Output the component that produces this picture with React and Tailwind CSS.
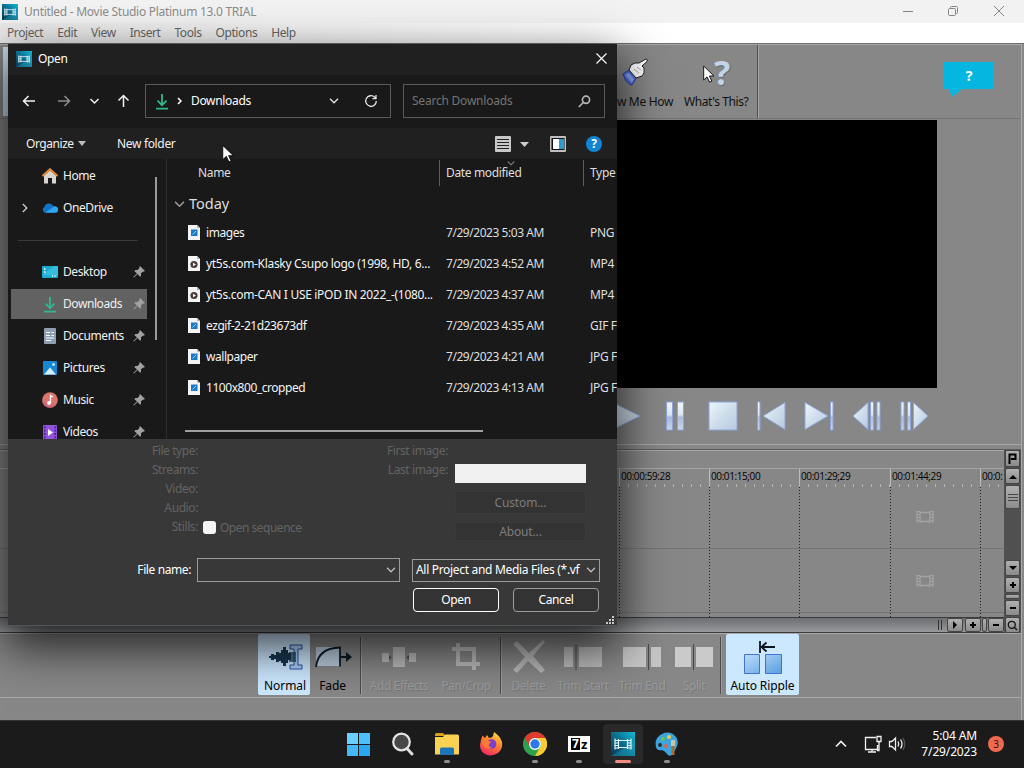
import clsx from "clsx";

const files = [
  { name: "images", date: "7/29/2023 5:03 AM", type: "PNG" },
  { name: "yt5s.com-Klasky Csupo logo (1998, HD, 6...", date: "7/29/2023 4:52 AM", type: "MP4", video: true },
  { name: "yt5s.com-CAN I USE iPOD IN 2022_-(1080...", date: "7/29/2023 4:37 AM", type: "MP4", video: true },
  { name: "ezgif-2-21d23673df", date: "7/29/2023 4:35 AM", type: "GIF F" },
  { name: "wallpaper", date: "7/29/2023 4:21 AM", type: "JPG F" },
  { name: "1100x800_cropped", date: "7/29/2023 4:13 AM", type: "JPG F" },
];

function StudioIcon({ size = 16 }) {
  return (
    <svg width={size} height={size} viewBox="0 0 24 24" className="shrink-0">
      <defs>
        <linearGradient id="studio" x1="0" y1="1" x2="1" y2="0">
          <stop offset="0" stopColor="#0a3550" />
          <stop offset="0.5" stopColor="#0b6d8d" />
          <stop offset="1" stopColor="#12b9d6" />
        </linearGradient>
      </defs>
      <rect width="24" height="24" fill="url(#studio)" />
      <path d="M0 24 24 10V24z" fill="#27b9d8" opacity=".35" />
      <path d="M4 6.500v11M7.500 7v10M16.500 7v10M20 6.500v11M4 8.500h3.500M4 11h3.500M4 13.500h3.500M4 16h3.500M16.500 8.500H20M16.500 11H20M16.500 13.500H20M16.500 16H20M7.500 8.500h9M7.500 15.500h9" stroke="#e4f6fa" strokeWidth="1.200" fill="none" />
    </svg>
  );
}

function Cursor({ className, size = 18 }) {
  return (
    <svg width={size * 0.65} height={size} viewBox="0 0 12 18" className={className}>
      <path d="M.7.8v14.400l3.500-3.200 2.500 5.300 2.300-1-2.400-5.200h4.600z" fill="#fff" stroke="#111" strokeWidth="1" />
    </svg>
  );
}

function DownloadIcon() {
  return (
    <svg width="14" height="17" viewBox="0 0 14 17" fill="none" stroke="#2fb890" strokeWidth="1.800">
      <path d="M7 1v11M2.500 7.700 7 12.200l4.500-4.500M1 15.700h12" />
    </svg>
  );
}

function Chevron({ className, color = "#e6e6e6", w = 10 }) {
  return (
    <svg width={w} height={w * 0.6} viewBox="0 0 10 6" fill="none" className={clsx("shrink-0", className)}>
      <path d="m1 .8 4 4 4-4" stroke={color} strokeWidth="1.300" />
    </svg>
  );
}

function TitleBar() {
  return (
    <header className="h-[44px] shrink-0 border-b border-[#6b6e70]">
      <div className="flex h-[23px] items-center bg-[#f2f2f2] pl-[2px] text-[12px] text-[#8c8c8c]">
        <StudioIcon size={16} />
        <span className="ml-[6px] w-[240px] tracking-[-0.28px] whitespace-nowrap">Untitled - Movie Studio Platinum 13.0 TRIAL</span>
        <svg width="112" height="14" viewBox="0 0 112 14" fill="none" stroke="#858585" className="-mt-[2px] mr-[16px] ml-auto">
          <path d="M7 7.500h10" />
          <rect x="52.500" y="4.500" width="7" height="7" rx="1" />
          <path d="M54.500 4.500v-1q0-1 1-1h5q1 0 1 1v5q0 1-1 1h-1" />
          <path d="m98 2 10 10M108 2 98 12" />
        </svg>
      </div>
      <nav className="flex h-[20px] items-center gap-[14px] bg-linear-to-r from-[#e9e9e9] to-white to-60% pl-[7px] text-[12px] tracking-[-0.42px] text-[#666]">
        {["Project", "Edit", "View", "Insert", "Tools", "Options", "Help"].map((m) => (
          <span key={m}>{m}</span>
        ))}
      </nav>
    </header>
  );
}

function TopToolbar() {
  return (
    <div className="flex h-[75px] items-stretch border-t border-b border-t-[#a8a8a8] border-b-[#747474]">
      <div className="my-[2px] ml-[3px] w-[40px] bg-[#c9def0]" />
      <div className="ml-[560px] w-[80px] pt-[13px] text-center">
        <svg width="26" height="28" viewBox="0 0 26 28" className="ml-[19px]">
          <path d="m1 16 6-4 7 8-4 7q-6-1-9-11z" fill="#4f70dc" stroke="#26409a" />
          <path d="m3 17 4-2 5 6-2 4z" fill="#8aa5f2" />
          <path d="m7 12 2-5 4-2 4 0 7-4q2 0 1 2.500l-5 4.500 2 2q1 6-2 8l-6 2z" fill="#fff" stroke="#222" />
          <path d="m15 9 4 3M12 11l5 4" stroke="#999" strokeWidth=".8" />
        </svg>
      </div>
      <div className="w-[75px] border-r border-[#505050] shadow-[1px_0_0_#a6a6a6]">
        <div className="relative mt-[12px] ml-[20px] h-[30px] w-[30px] font-['Open_Sans'] text-[34px] leading-[30px] font-bold text-[#c3d4e6] [text-shadow:1px_1px_1px_#5b6d80]">
          <span className="ml-[11px]">?</span>
          <Cursor className="absolute top-[8px] left-0" size={18} />
        </div>
      </div>
      <div className="mt-[17px] mr-[27px] ml-auto h-[36px] w-[50px]">
        <div className="flex h-[27px] items-center justify-center bg-[#05b7e0] text-[14px] font-bold text-white">?</div>
        <svg width="20" height="9" className="ml-[5px]"><path d="M0 0h13L3 8z" fill="#05b7e0" /></svg>
      </div>
    </div>
  );
}

function ToolbarLabels() {
  return (
    <div className="absolute top-[94px] left-[592px] flex gap-[11px] text-[12px] leading-[16px] whitespace-nowrap text-[#111]">
      <span className="w-[81px] text-right">Show Me How</span>
      <span className="tracking-[-0.4px]">What's This?</span>
    </div>
  );
}

function Transport() {
  return (
    <div className="flex h-[56px] items-center pl-[603px]">
      <svg width="336" height="36" viewBox="0 0 336 36" fill="url(#glass)" stroke="#8ea4da" strokeWidth="1">
        <defs>
          <linearGradient id="glass" x1="0" y1="0" x2="1" y2="1">
            <stop offset="0" stopColor="#eaf6fc" />
            <stop offset="0.500" stopColor="#cfdeeb" />
            <stop offset="1" stopColor="#b5c9e2" />
          </linearGradient>
          <linearGradient id="bar" x1="0" y1="0" x2="0" y2="1">
            <stop offset="0" stopColor="#f0f8fd" />
            <stop offset="0.450" stopColor="#dbe7f2" />
            <stop offset="0.550" stopColor="#a9bbd9" />
            <stop offset="1" stopColor="#c9daee" />
          </linearGradient>
        </defs>
        <path d="m9 4 28 14L9 32z" />
        <g fill="url(#bar)">
          <rect x="63.500" y="4" width="6" height="28" />
          <rect x="74.500" y="4" width="6" height="28" />
          <rect x="154.500" y="4" width="2.500" height="28" />
          <rect x="227.500" y="4" width="2.500" height="28" />
          <rect x="267.500" y="4" width="3" height="28" />
          <rect x="274" y="4" width="3" height="28" />
          <rect x="298" y="4" width="3" height="28" />
          <rect x="304.500" y="4" width="3" height="28" />
        </g>
        <rect x="106" y="4" width="28" height="28" />
        <path d="M182 4.500v27L160 18z" />
        <path d="M202 4.500v27L225 18z" />
        <path d="M265 4.500v27L250 18z" />
        <path d="M310.500 4.500v27L325 18z" />
      </svg>
    </div>
  );
}

const cell = "flex shrink-0 items-center justify-center rounded-[2px] border border-[#454545] bg-linear-to-b from-[#b0b0b0] to-[#8b8b8b] text-black";

function PlusMinus({ plus }) {
  return (
    <svg width="8" height="8" stroke="#000" strokeWidth="2">
      <path d={plus ? "M1 4h6M4 1v6" : "M1 4h6"} />
    </svg>
  );
}

function Film() {
  return (
    <svg width="20" height="14" viewBox="0 0 20 14" fill="none" stroke="#a3a3a3" strokeWidth="1.300">
      <path d="M2 1v12M5 1v12M15 1v12M18 1v12M5 2.500h10M5 11.500h10" />
      <path d="M3.500 1v12M16.500 1v12" strokeDasharray="1 2" strokeWidth="3" />
    </svg>
  );
}

function Timeline() {
  const marks = [
    ["00:00:59:28", "w-[90px]"],
    ["00:01:15;00", "w-[90px]"],
    ["00:01:29;29", "w-[91px]"],
    ["00:01:44;29", "w-[90px]"],
    ["00:0:", "w-[24px]"],
  ];
  return (
    <div className="flex h-[184px] border-t border-[#5e5e5e]">
      <div className="flex w-[1004px] flex-col border-t border-[#a8a8a8]">
        <div className="h-[18px] border-b border-[#a6a6a6]" />
        <div className="relative flex h-[148px] pl-[619px]">
          <div className="absolute inset-x-0 top-[79px] h-px bg-[#757575]" />
          <div className="absolute inset-x-0 top-[143px] h-px bg-[#757575]" />
          {marks.map(([t, w]) => (
            <div key={t} className={clsx(w, "flex shrink-0 flex-col overflow-hidden")}>
              <div className="h-[15px] border-l border-[#bbb] pl-px font-['Open_Sans'] text-[10px] leading-[15px] tracking-[-0.4px] whitespace-nowrap text-black">{t}</div>
              <div className="h-[3px] bg-[repeating-linear-gradient(90deg,#b5b5b5_0_1px,transparent_1px_9px)]" />
              <div className="w-px flex-1 bg-[repeating-linear-gradient(#222_0_1px,transparent_1px_3px)]" />
            </div>
          ))}
          <div className="absolute top-[41px] left-[915px]"><Film /></div>
          <div className="absolute top-[105px] left-[915px]"><Film /></div>
        </div>
        <div className="flex h-[16px] border-y border-[#3a3a3a] bg-linear-to-b from-[#6c6f73] to-[#97999b]">
          <div className="mr-[3px] ml-auto flex items-center gap-[2px]">
            <i className="h-[10px] w-px bg-[#333]" />
            <i className="h-[10px] w-px bg-[#333]" />
          </div>
          <div className={clsx(cell, "mx-[2px] w-[16px]")}><svg width="6" height="8"><path d="M1 0v8l4-4z" /></svg></div>
          <div className={clsx(cell, "w-[16px]")}><PlusMinus plus /></div>
          <div className={clsx(cell, "mx-[1px] w-[5px]")} />
          <div className={clsx(cell, "w-[16px]")}><PlusMinus /></div>
        </div>
      </div>
      <div className="flex w-[17px] flex-col gap-[1px] bg-[#505050] px-px">
        <div className={clsx(cell, "h-[17px]")}>
          <svg width="9" height="11" fill="none" stroke="#000" strokeWidth="2"><path d="M1.500 11V1.500h6V6H3" /></svg>
        </div>
        <div className={clsx(cell, "h-[16px]")}><svg width="8" height="5"><path d="m0 5 4-4 4 4z" /></svg></div>
        <div className={clsx(cell, "h-[24px] flex-col gap-[2px]")}>
          <i className="h-px w-[10px] bg-[#444]" />
          <i className="h-px w-[10px] bg-[#444]" />
          <i className="h-px w-[10px] bg-[#444]" />
        </div>
        <div className="flex-1" />
        <div className={clsx(cell, "h-[16px]")}><svg width="8" height="5"><path d="m0 0 4 4 4-4z" /></svg></div>
        <div className={clsx(cell, "h-[16px]")}><PlusMinus plus /></div>
        <div className={clsx(cell, "h-[5px]")} />
        <div className={clsx(cell, "h-[16px]")}><PlusMinus /></div>
        <div className={clsx(cell, "h-[16px]")}>
          <svg width="11" height="11" fill="none" stroke="#111" strokeWidth="1.300"><circle cx="4.800" cy="4.800" r="3.500" /><path d="m7 7 3 3" /></svg>
        </div>
      </div>
    </div>
  );
}

function Tool({ label, className, off, children }) {
  return (
    <div className={clsx("flex shrink-0 flex-col items-center", className)}>
      <div className="flex h-[44px] items-center pt-[1px]">{children}</div>
      <span className={clsx("text-[12px] leading-[16px] whitespace-nowrap", off ? "tracking-[-0.4px] text-[#9a9a9a] [text-shadow:1px_1px_0_#777]" : "tracking-[-0.1px] text-black")}>{label}</span>
    </div>
  );
}

function Divider({ className }) {
  return <div className={clsx("my-[3px] w-px shrink-0 bg-[#4c4c4c] shadow-[1px_0_0_#9c9c9c]", className)} />;
}

function EditToolbar() {
  return (
    <div className="flex h-[65px] border-y border-[#aaa] pl-[258px]">
      <Tool label="Normal" className="h-[61px] w-[52px] rounded-[2px] bg-[#cce8ff] pl-[2px]">
        <svg width="36" height="28" viewBox="0 0 36 28">
          <path d="M2 13h2v-2h3v1h2V9h3v1h2V7h2V4h3v3h2v3h3v7h-3v3h-2v3h-3v-3h-2v-2h-2v1H9v-3H7v1H4v-2H2z" fill="#17384f" />
          <path d="M23 2h12v4h-4v16h4v4H23v-4h4V6h-4z" fill="#9dbff0" fillOpacity=".7" stroke="#2654a5" />
          <path d="M22 9h7v10h-7z" fill="#17384f" opacity=".7" />
        </svg>
      </Tool>
      <Tool label="Fade" className="w-[45px]">
        <svg width="38" height="28" viewBox="0 0 38 28" className="ml-[2px]">
          <rect x="1" y="4" width="24" height="19" fill="#b9cbdd" />
          <path d="M1 24Q3 5 25 4.500v19M25 14h10" fill="none" stroke="#0b1c29" strokeWidth="1.800" />
          <path d="m31 9 6 5-6 5z" fill="#0b1c29" />
        </svg>
      </Tool>
      <Divider className="ml-[5px]" />
      <Tool label="Add Effects" off className="w-[76px]">
        <svg width="34" height="24" fill="#b9b9b9"><path d="M11 2h12v20H11zM0 8h7v9H0zM27 8h7v9h-7z" /><path d="M7 10l3 2.500L7 15zM27 10l-3 2.500 3 2.500z" fill="#555" /></svg>
      </Tool>
      <Tool label="Pan/Crop" off className="w-[58px]">
        <svg width="28" height="28" fill="none" stroke="#b9b9b9" strokeWidth="4"><path d="M0 6h22v21M6 0v21h22" /></svg>
      </Tool>
      <Divider className="ml-[5px]" />
      <Tool label="Delete" off className="w-[55px]">
        <svg width="34" height="34" fill="#b6b6b6"><path d="m1 4 4-3 12 12L31 0l2 2-12 14 12 14-4 3-13-12L5 33l-4-3 12-13z" /></svg>
      </Tool>
      <Tool label="Trim Start" off className="w-[54px]">
        <svg width="38" height="26" fill="#bbb"><path d="M0 3h9v20H0zM15 3h23v20H15z" /><path d="M12 0v26" stroke="#484848" /></svg>
      </Tool>
      <Tool label="Trim End" off className="w-[64px]">
        <svg width="38" height="26" fill="#c6c6c6"><path d="M0 3h23v20H0zM28 3h10v20H28z" /><path d="M25.500 0v26" stroke="#484848" /></svg>
      </Tool>
      <Tool label="Split" off className="w-[40px]">
        <svg width="38" height="26" fill="#cacaca"><path d="M0 3h16v20H0zM21 3h17v20H21z" /><path d="M18.500 0v26" stroke="#484848" /></svg>
      </Tool>
      <Divider className="ml-[6px]" />
      <Tool label="Auto Ripple" className="ml-[5px] h-[61px] w-[73px] rounded-[2px] bg-[#cce8ff] tracking-[-0.2px]">
        <svg width="40" height="36" viewBox="0 0 40 36">
          <defs>
            <linearGradient id="ripple" x1="0" y1="0" x2="1" y2="1">
              <stop offset="0" stopColor="#b9dcfb" />
              <stop offset="1" stopColor="#5b9ee0" />
            </linearGradient>
          </defs>
          <path d="M1.500 15.500h15v19h-15zM22.500 15.500h16v19h-16z" fill="url(#ripple)" stroke="#4272cc" />
          <path d="M17 2v12M20 8h12M23.500 3.500 18.500 8l5 4.500" fill="none" stroke="#0a1420" strokeWidth="1.800" />
        </svg>
      </Tool>
    </div>
  );
}

function Pin() {
  return (
    <svg width="12" height="12" viewBox="0 0 12 12" fill="#a2a2a2">
      <path d="M7 0 12 5l-1.500.8-.6-.3-2 2 .2 2.200-1 1L4.500 8 1 11.500.3 11 4 7.400 1.300 4.900l1-1 2.200.2 2-2L6.200 1.500z" />
    </svg>
  );
}

function PlaceIcon({ name }) {
  if (name === "Downloads") return <DownloadIcon />;
  return (
    <svg width="16" height="16" viewBox="0 0 16 16">
      {name === "Home" && (
        <>
          <path d="M2 7.500 8 2.500l6 5V15.500h-4V10H6v5.500H2z" fill="#d9d5d1" />
          <path d="M.5 8 8 1.200 15.500 8" fill="none" stroke="#e08a3c" strokeWidth="2" />
        </>
      )}
      {name === "OneDrive" && (
        <>
          <path d="M3 12.500A3 3 0 0 1 2.300 7a5 5 0 0 1 9.200-.8A3.300 3.300 0 0 1 13 12.500z" fill="#1272c4" />
          <path d="M3 12.800 11 7.200a3 3 0 0 1 5 3 2.600 2.600 0 0 1-2.500 2.600z" fill="#2fa7ee" />
        </>
      )}
      {name === "Desktop" && (
        <>
          <rect y="2" width="16" height="12" rx="1" fill="#1ea8cf" />
          <path d="M0 11 12 2h3q1 0 1 1v9z" fill="#3cc6e0" opacity=".7" />
          <path d="M2 5h1.500M2 8h1.500M10 12h1M12.500 12h1" stroke="#fff" strokeWidth="1.300" />
        </>
      )}
      {name === "Documents" && (
        <>
          <rect x="2" width="12" height="16" rx="1" fill="#8f9fb3" />
          <path d="M4 4.500h4M4 7.500h4M9.500 4.500H12M9.500 7.500H12M4 10h8M4 12.500h5" stroke="#fff" strokeWidth="1.200" />
        </>
      )}
      {name === "Pictures" && (
        <>
          <rect x="1" y="1" width="14" height="14" rx="1" fill="#1687d3" />
          <path d="m2 14.500 6-7 6 7z" fill="#d7eefb" />
          <circle cx="11.500" cy="4.500" r="1.300" fill="#fff" />
        </>
      )}
      {name === "Music" && (
        <>
          <circle cx="8" cy="8" r="7.800" fill="#dc7569" />
          <path d="M0 9a8 8 0 0 0 14 4z" fill="#c55f80" opacity=".6" />
          <path d="M8.500 11V3.500l2.500 1.500" fill="none" stroke="#fff" strokeWidth="1.300" />
          <circle cx="7" cy="11" r="1.900" fill="#fff" />
        </>
      )}
      {name === "Videos" && (
        <>
          <rect x="1" y="1" width="14" height="15" rx="1" fill="#9254dc" />
          <path d="M2.800 2.500v13M13.200 2.500v13" stroke="#4b2192" strokeWidth="1.800" strokeDasharray="1.800 1.500" />
          <path d="m6 5 5 3.500L6 12z" fill="#fff" />
        </>
      )}
    </svg>
  );
}

function Place({ name, pinned, expandable, selected }) {
  return (
    <div className={clsx("ml-[3px] flex h-[32px] w-[136px] shrink-0 items-center bg-clip-content py-[1px] text-[12px] tracking-[-0.42px] text-[#f0f0f0]", selected && "bg-[#626262]")}>
      <span className="w-[31px] pl-[9px]">
        {expandable && <Chevron className="-rotate-90" color="#d0d0d0" />}
      </span>
      <span className="flex w-[16px] justify-center"><PlaceIcon name={name} /></span>
      <span className="ml-[5px]">{name}</span>
      {pinned && <span className="mr-[2px] ml-auto"><Pin /></span>}
    </div>
  );
}

function FileIcon({ video }) {
  return (
    <svg width="12" height="15" viewBox="0 0 12 15">
      <path d="M0 0h9l3 3v12H0z" fill="#f4f4f4" />
      <path d="M9 0v3h3z" fill="#b5b5b5" />
      {video ? (
        <>
          <circle cx="6" cy="8.500" r="3.600" fill="#4b3b3b" />
          <path d="m5 6.700 3 1.800-3 1.800z" fill="#fff" />
        </>
      ) : (
        <>
          <rect x="3" y="4.500" width="6.500" height="6.500" fill="#1b7ac8" />
          <path d="m4.500 9.500 3.500-3.500" stroke="#8fd0f7" />
        </>
      )}
    </svg>
  );
}

function DialogTop() {
  return (
    <>
      <div className="flex h-[31px] shrink-0 items-center bg-[#202020] pr-[10px] pb-[2px] pl-[8px] text-[12px] text-white">
        <StudioIcon size={16} />
        <span className="ml-[6px]">Open</span>
        <svg width="11" height="11" className="ml-auto" stroke="#fff" strokeWidth="1.100"><path d="m.5.5 10 10M10.500.5l-10 10" /></svg>
      </div>
      <div className="flex h-[53px] shrink-0 items-center bg-[#191919] pb-px text-[12px]">
        <svg width="110" height="14" viewBox="0 0 110 14" fill="none" stroke="#f2f2f2" strokeWidth="1.500" className="ml-[14px]">
          <path d="M13 7H1.500M6.500 2l-5 5 5 5" />
          <path d="M36 7h11.500M42.500 2l5 5-5 5" stroke="#8f8f8f" />
          <path d="m68.500 5 4 4 4-4" />
          <path d="M101.500 13V1.500M96.500 6.500l5-5 5 5" />
        </svg>
        <div className="ml-[13px] flex h-[34px] w-[246px] items-center border border-[#5a5a5a] text-white">
          <span className="ml-[9px]"><DownloadIcon /></span>
          <svg width="5" height="8" className="ml-[8px]" fill="none" stroke="#fff" strokeWidth="1.500"><path d="m1 1 3 3-3 3" /></svg>
          <span className="ml-[9px]">Downloads</span>
          <Chevron className="ml-auto" />
          <svg width="14" height="14" viewBox="0 0 14 14" fill="none" stroke="#e8e8e8" strokeWidth="1.300" className="mr-[12px] ml-[25px]">
            <path d="M12.300 7a5.300 5.300 0 1 1-1.700-3.900L12 4.500M12 1v3.700H8.500" />
          </svg>
        </div>
        <div className="ml-[12px] flex h-[34px] w-[202px] items-center border border-[#5a5a5a] text-[#747474]">
          <span className="ml-[8px] tracking-[-0.22px]">Search Downloads</span>
          <svg width="13" height="13" fill="none" stroke="#b5b5b5" strokeWidth="1.700" className="mr-[13px] ml-auto">
            <circle cx="8" cy="4.800" r="3.600" /><path d="M5.300 7.500.8 12" />
          </svg>
        </div>
      </div>
      <div className="flex h-[31px] shrink-0 items-center bg-[#202020] text-[12px] text-[#f0f0f0]">
        <span className="ml-[18px] w-[47px] tracking-[-0.45px]">Organize</span>
        <svg width="8" height="5" className="ml-[5px]"><path d="M0 0h8L4 5z" fill="#bdbdbd" /></svg>
        <span className="ml-[31px]">New folder</span>
        <svg width="110" height="18" viewBox="0 0 110 18" className="mr-[14px] ml-auto">
          <rect x="2" y="1" width="16" height="16" rx="1" fill="#c8c8c8" />
          <path d="M4 4.500h12M4 7.500h12M4 10.500h12M4 13.500h12" stroke="#222" />
          <path d="M27 7h9l-4.500 5z" fill="#ccc" />
          <rect x="57" y="1" width="16" height="16" rx="1" fill="#c0c0c0" />
          <rect x="58.500" y="3" width="13" height="12" fill="#111" />
          <path d="M60 4h6.500v10H60z" fill="#fff" />
          <path d="M66.500 4H71v10h-4.500z" fill="#2b9bc9" />
          <circle cx="101" cy="9" r="8" fill="#1184d3" />
          <text x="101" y="13" textAnchor="middle" fill="#fff" fontSize="12" fontWeight="bold">?</text>
        </svg>
      </div>
    </>
  );
}

function Explorer() {
  return (
    <div className="flex h-[280px] shrink-0 overflow-hidden bg-[#191919] text-[12px]">
      <div className="flex w-[159px] shrink-0 border-r border-[#2e2e2e]">
        <div className="flex w-[147px] flex-col pt-[1px]">
          <Place name="Home" />
          <Place name="OneDrive" expandable />
          <div className="flex h-[32px] shrink-0 items-center"><div className="ml-[10px] h-px w-[120px] bg-[#3a3a3a]" /></div>
          <Place name="Desktop" pinned />
          <Place name="Downloads" pinned selected />
          <Place name="Documents" pinned />
          <Place name="Pictures" pinned />
          <Place name="Music" pinned />
          <Place name="Videos" pinned />
        </div>
        <div className="mt-[18px] h-[163px] w-[2px] bg-[#9b9b9b]" />
      </div>
      <div className="flex w-[450px] flex-col overflow-hidden pl-[18px]">
        <div className="flex h-[28px] shrink-0 items-center text-[#dedede]">
          <span className="w-[254px] shrink-0 pl-[13px]">Name</span>
          <div className="relative h-[26px] w-[144px] shrink-0 border-l border-[#5d5d5d] pl-[6px] leading-[26px] tracking-[-0.35px]">
            Date modified
            <Chevron className="absolute top-[1px] left-[67px]" color="#888" w={8} />
          </div>
          <div className="h-[26px] border-l border-[#5d5d5d] pl-[6px] leading-[26px]">Type</div>
        </div>
        <div className="flex h-[30px] shrink-0 items-center pt-[4px] text-[14.500px] tracking-normal text-[#dedede]">
          <Chevron className="mr-[4px] -ml-[11px]" color="#9a9a9a" w={11} />
          Today
        </div>
        {files.map((f) => (
          <div key={f.name} className="flex h-[31px] shrink-0 items-center whitespace-nowrap text-[#f4f4f4]">
            <span className="ml-[3px] w-[18px] shrink-0"><FileIcon video={f.video} /></span>
            <span className={clsx("w-[240px] shrink-0", f.video ? "tracking-[-0.31px]" : "tracking-[-0.45px]")}>{f.name}</span>
            <span className="w-[144px] shrink-0 tracking-[-0.450px] text-[#dedede]">{f.date}</span>
            <span className="text-[#dedede]">{f.type}</span>
          </div>
        ))}
        <div className="mt-[27px] h-[2px] w-[298px] shrink-0 bg-[#a0a0a0]" />
      </div>
    </div>
  );
}

function DialogBottom() {
  const disabled = "flex items-center justify-center border border-[#3a3a3a] bg-[#333] text-[#7c7c7c] tracking-[-0.15px]";
  return (
    <div className="relative flex flex-1 flex-col bg-[#383838] text-[12px] tracking-[-0.4px] text-[#636363]">
      <div className="flex h-[119px] pt-[2px]">
        <div className="w-[190px] text-right leading-[19px]">
          {["File type:", "Streams:", "Video:", "Audio:", "Stills:"].map((l) => (
            <div key={l}>{l}</div>
          ))}
        </div>
        <div className="mt-[79px] ml-[5px] flex h-[15px] w-[130px] items-center gap-[4px]">
          <span className="h-[13px] w-[13px] rounded-[3px] bg-[#f5f5f5]" />
          <span className="tracking-[-0.5px]">Open sequence</span>
        </div>
        <div className="w-[115px] text-right leading-[19px]">
          <div>First image:</div>
          <div>Last image:</div>
        </div>
        <div className="ml-[7px] flex w-[131px] flex-col pt-[23px]">
          <div className="h-[19px] bg-[#f0f0f0]" />
          <div className={clsx(disabled, "mt-[8px] h-[23px]")}>Custom...</div>
          <div className={clsx(disabled, "mt-[8px] h-[19px]")}>About...</div>
        </div>
      </div>
      <div className="flex h-[24px] items-center text-white">
        <span className="w-[183px] text-right">File name:</span>
        <div className="ml-[6px] flex h-[24px] w-[203px] items-center justify-end border border-[#9c9c9c] pr-[3px]"><Chevron color="#bbb" /></div>
        <div className="ml-[12px] flex h-[23px] w-[188px] items-center justify-between border border-[#9c9c9c] pr-[3px] pl-[3px] tracking-[-0.31px] whitespace-nowrap">
          <span>All Project and Media Files (*.vf</span>
          <Chevron color="#bbb" />
        </div>
      </div>
      <div className="mt-[6px] flex gap-[14px] pl-[405px] text-white">
        <button className="h-[24px] w-[86px] rounded-[4px] border border-white bg-[#333]">Open</button>
        <button className="h-[24px] w-[86px] rounded-[4px] border border-[#9c9c9c] bg-[#333]">Cancel</button>
      </div>
      <svg width="9" height="9" fill="#c8c8c8" className="absolute right-[2px] bottom-0">
        <path d="M6 0h2v2H6zM3 3h2v2H3zM6 3h2v2H6zM0 6h2v2H0zM3 6h2v2H3zM6 6h2v2H6z" />
      </svg>
    </div>
  );
}

function OpenDialog() {
  return (
    <div className="absolute top-[44px] left-[8px] flex h-[582px] w-[609px] flex-col overflow-hidden border-b border-[#555]">
      <DialogTop />
      <Explorer />
      <DialogBottom />
    </div>
  );
}

function TaskIcon({ active, running, children }) {
  return (
    <div className="flex w-[44px] justify-center">
      <div className={clsx("flex h-[40px] w-[40px] flex-col items-center rounded-[4px] pt-[8px]", active && "bg-[#292929]")}>
        <div className="flex h-[24px] items-center">{children}</div>
        {active && <i className="mt-[4px] h-[3px] w-[16px] rounded-full bg-[#f08b87]" />}
        {running && <i className="mt-[4px] h-[3px] w-[6px] rounded-full bg-[#8e8e8e]" />}
      </div>
    </div>
  );
}

function Taskbar() {
  return (
    <footer className="flex h-[48px] shrink-0 items-center border-t border-[#333] bg-[#1b1b1b] pb-px pl-[337px]">
      <TaskIcon>
        <div className="mr-px grid grid-cols-2 gap-px">
          <i className="h-[11px] w-[11px] bg-[#6bd0fb]" />
          <i className="h-[11px] w-[11px] bg-[#4dc0f8]" />
          <i className="h-[11px] w-[11px] bg-[#45b8f5]" />
          <i className="h-[11px] w-[11px] bg-[#2ba7ef]" />
        </div>
      </TaskIcon>
      <TaskIcon>
        <svg width="24" height="24" viewBox="0 0 24 24"><path d="m15.500 16 5.500 6" stroke="#ddd" strokeWidth="3" strokeLinecap="round" /><circle cx="10.500" cy="10" r="8.300" fill="#474747" stroke="#e4e4e4" strokeWidth="2.200" /></svg>
      </TaskIcon>
      <TaskIcon running>
        <svg width="24" height="22" viewBox="0 0 24 22">
          <path d="M0 1.500Q0 0 1.500 0H8l2.500 3H0z" fill="#d9a01c" />
          <path d="M0 4h8l2-2.500h12.500Q24 1.500 24 3v18.500H0z" fill="#fbd152" />
          <path d="M5 22v-6q0-1.500 1.500-1.500h11q1.500 0 1.500 1.500v6z" fill="#1d74b8" />
        </svg>
      </TaskIcon>
      <TaskIcon>
        <svg width="24" height="24" viewBox="0 0 24 24">
          <defs>
            <linearGradient id="fox" x1=".8" y1="0" x2=".3" y2="1">
              <stop offset="0" stopColor="#ffdf40" />
              <stop offset=".5" stopColor="#ff7a2b" />
              <stop offset="1" stopColor="#f0276b" />
            </linearGradient>
          </defs>
          <path d="M2 8 3.500 3.500 6 6l2-3 2 3q3 0 4-2l1-4q6 4 8 10 1 7-4 11-6 4-12 1.500T1 13z" fill="url(#fox)" />
          <circle cx="12.500" cy="12" r="4.800" fill="#7d3fd0" />
          <path d="M5 9q4-2 7 1l-2 2q-1 3 3 3.500-4 2.500-7.500-.5t-1.500-6z" fill="#ff7a35" />
        </svg>
      </TaskIcon>
      <TaskIcon running>
        <svg width="24" height="24" viewBox="0 0 24 24">
          <circle cx="12" cy="12" r="12" fill="#2ba24c" />
          <path d="M1.600 6A12 12 0 0 1 22.400 6H12a6 6 0 0 0-5.200 9z" fill="#e23b2e" />
          <path d="M22.400 6A12 12 0 0 1 12 24l5.200-9A6 6 0 0 0 12 6z" fill="#fdcb2f" />
          <circle cx="12" cy="12" r="6" fill="#fff" />
          <circle cx="12" cy="12" r="4.700" fill="#2c78e4" />
        </svg>
      </TaskIcon>
      <TaskIcon running>
        <div className="flex h-[16px] w-[22px] items-center bg-white pl-[3px] leading-none font-bold tracking-normal">
          <span className="flex h-[12px] w-[9px] items-center justify-center bg-black text-[12px] text-white">7</span>
          <span className="mt-[1px] ml-px text-[13px] text-black">z</span>
        </div>
      </TaskIcon>
      <TaskIcon active><StudioIcon size={24} /></TaskIcon>
      <TaskIcon running>
        <svg width="24" height="24" viewBox="0 0 24 24">
          <path d="M1 15Q-1 6 7 2t14 3q3 4 1 9t-5 9q-3 2-5-1t-5-4q-5 1-6-3z" fill="#3ca5dd" />
          <circle cx="8" cy="7" r="2" fill="#6fc24c" /><circle cx="14" cy="5" r="2" fill="#f2c83f" />
          <circle cx="5" cy="13" r="2" fill="#20313e" /><circle cx="11" cy="14" r="2" fill="#e8604c" />
          <path d="M18 14v9" stroke="#a66b35" strokeWidth="3" /><path d="M16 8h4v6h-4z" fill="#c9c2b2" />
        </svg>
      </TaskIcon>
      <svg width="72" height="18" viewBox="0 0 72 18" fill="none" stroke="#f0f0f0" strokeWidth="1.300" className="ml-[146px]">
        <path d="m1 11.500 5-5 5 5" strokeWidth="1.700" />
        <path d="M41 2.500H30.500v12H42.500V10M33 17h8M37 14.500V17M42 1.500h4v5h-4zM44 6.500v9h-2" />
        <path d="M54.500 6.500H57L60.500 3v12L57 11.500h-2.500zM63 6.500q1.500 2.500 0 5M65.500 4.500q3 4.500 0 9" />
        <path d="M68 3q3.500 6 0 12" stroke="#555" />
      </svg>
      <div className="mr-[11px] ml-auto pb-px text-right text-[12px] leading-[16px] tracking-[-0.15px] text-white">
        <div>5:04 AM</div>
        <div>7/29/2023</div>
      </div>
      <div className="mr-[20px] flex h-[16px] w-[16px] items-center justify-center rounded-full bg-[#f0694f] text-[10px] text-[#2a1512]">3</div>
    </footer>
  );
}

export default function App() {
  return (
    <div className="relative flex h-[768px] w-[1024px] flex-col overflow-hidden bg-[#878787] font-['Noto_Sans','Open_Sans',sans-serif] tracking-[-0.33px]">
      <TitleBar />
      <main className="mr-[2px] flex h-[676px] shrink-0 flex-col border-r border-[#aaa]">
        <TopToolbar />
        <div className="flex h-[269px] pt-px pl-[617px]"><div className="h-[268px] w-[320px] bg-black" /></div>
        <Transport />
        <div className="h-[5px] border-t border-[#a8a8a8]" />
        <Timeline />
        <EditToolbar />
      </main>
      <ToolbarLabels />
      <div className="absolute top-[44px] left-[8px] h-[581px] w-[609px] shadow-[0_18px_44px_4px_rgba(0,0,0,0.750)]" />
      <OpenDialog />
      <Cursor className="absolute top-[144px] left-[222px]" size={19} />
      <Taskbar />
    </div>
  );
}
